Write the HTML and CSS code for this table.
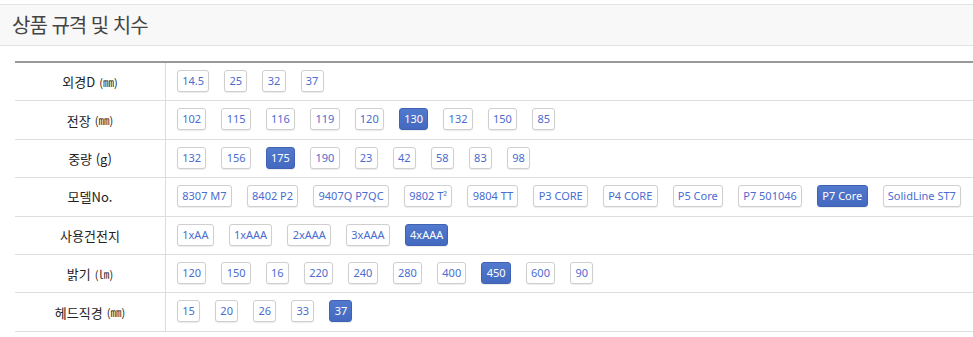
FILE: index.html
```html
<!DOCTYPE html>
<html lang="ko">
<head>
<meta charset="utf-8">
<title>상품 규격 및 치수</title>
<link rel="stylesheet" href="styles.css">
</head>
<body>
<div class="panel-head"><h2 class="panel-title">상품 규격 및 치수</h2></div>
<div class="spec">
  <div class="spec-row">
    <div class="spec-label">외경D <span class="unit">(㎜)</span></div>
    <div class="spec-tags">
      <span class="tag">14.5</span><span class="tag">25</span><span class="tag">32</span><span class="tag">37</span>
    </div>
  </div>
  <div class="spec-row">
    <div class="spec-label">전장 <span class="unit">(㎜)</span></div>
    <div class="spec-tags">
      <span class="tag">102</span><span class="tag">115</span><span class="tag">116</span><span class="tag">119</span><span class="tag">120</span><span class="tag active">130</span><span class="tag">132</span><span class="tag">150</span><span class="tag">85</span>
    </div>
  </div>
  <div class="spec-row">
    <div class="spec-label">중량 (g)</div>
    <div class="spec-tags">
      <span class="tag">132</span><span class="tag">156</span><span class="tag active">175</span><span class="tag">190</span><span class="tag">23</span><span class="tag">42</span><span class="tag">58</span><span class="tag">83</span><span class="tag">98</span>
    </div>
  </div>
  <div class="spec-row">
    <div class="spec-label">모델No.</div>
    <div class="spec-tags">
      <span class="tag">8307 M7</span><span class="tag">8402 P2</span><span class="tag">9407Q P7QC</span><span class="tag">9802 T²</span><span class="tag">9804 TT</span><span class="tag">P3 CORE</span><span class="tag">P4 CORE</span><span class="tag">P5 Core</span><span class="tag">P7 501046</span><span class="tag active">P7 Core</span><span class="tag">SolidLine ST7</span>
    </div>
  </div>
  <div class="spec-row">
    <div class="spec-label">사용건전지</div>
    <div class="spec-tags">
      <span class="tag">1xAA</span><span class="tag">1xAAA</span><span class="tag">2xAAA</span><span class="tag">3xAAA</span><span class="tag active">4xAAA</span>
    </div>
  </div>
  <div class="spec-row">
    <div class="spec-label">밝기 <span class="unit">(㏐)</span></div>
    <div class="spec-tags">
      <span class="tag">120</span><span class="tag">150</span><span class="tag">16</span><span class="tag">220</span><span class="tag">240</span><span class="tag">280</span><span class="tag">400</span><span class="tag active">450</span><span class="tag">600</span><span class="tag">90</span>
    </div>
  </div>
  <div class="spec-row">
    <div class="spec-label">헤드직경 <span class="unit">(㎜)</span></div>
    <div class="spec-tags">
      <span class="tag">15</span><span class="tag">20</span><span class="tag">26</span><span class="tag">33</span><span class="tag active">37</span>
    </div>
  </div>
</div>
</body>
</html>
```
FILE: styles.css
```css
html, body {
  margin: 0;
  padding: 0;
  background: #fff;
}
body {
  font-family: "Noto Sans CJK KR", "Noto Sans", sans-serif;
  color: #222;
}
.panel-head {
  margin-top: 4px;
  height: 40px;
  background: #f8f8f8;
  border-top: 1px solid #e4e4e4;
  border-bottom: 1px solid #e4e4e4;
  display: flex;
  align-items: center;
  padding-left: 12px;
}
.panel-title {
  margin: 0;
  font-size: 20px;
  font-weight: 400;
  letter-spacing: -1px;
  color: #444;
  line-height: 1;
}
.spec {
  margin: 15px 0 0 15px;
  border-top: 2px solid #999;
}
.spec-row {
  display: grid;
  grid-template-columns: 151px 1fr;
  border-bottom: 1px solid #ddd;
}
.spec-label {
  border-right: 1px solid #ddd;
  display: flex;
  align-items: center;
  justify-content: center;
  font-size: 13px;
  color: #222;
}
.unit {
  font-size: 11px;
  margin-left: 4px;
}
.spec-tags {
  display: flex;
  flex-wrap: wrap;
  gap: 15px;
  padding: 7px 10px 8.4px 11px;
}
.tag {
  box-sizing: border-box;
  height: 22px;
  line-height: 20px;
  padding: 0 4.25px;
  border: 1px solid #cfcfcf;
  border-radius: 3px;
  background: #fff;
  box-shadow: 0 1px 1px rgba(0,0,0,0.08);
  font-family: "Noto Sans", "Noto Sans CJK KR", sans-serif;
  font-size: 11px;
  color: #4a6cd0;
  white-space: nowrap;
}
.tag.active {
  background: linear-gradient(#5179cc, #4469c0);
  border-color: #3f62b4;
  color: #fff;
}
```
